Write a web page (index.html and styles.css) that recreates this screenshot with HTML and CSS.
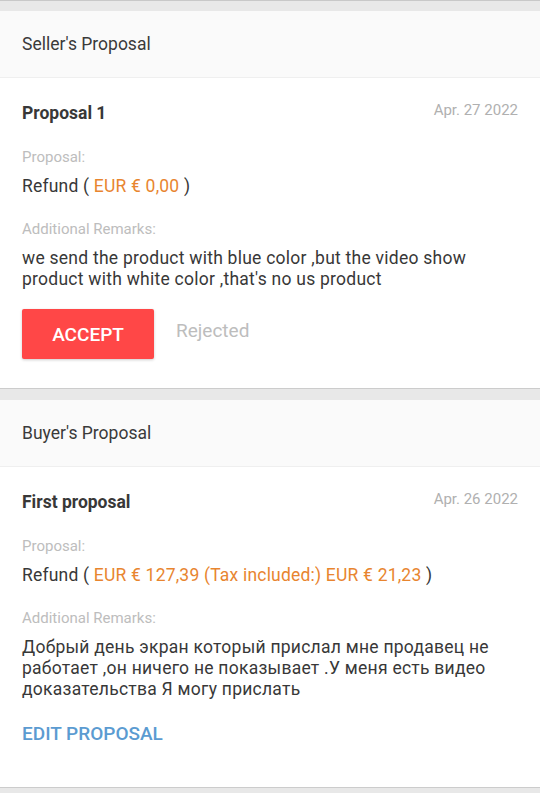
FILE: index.html
```html
<!DOCTYPE html>
<html>
<head>
    <meta charset="utf-8">
    <link rel="stylesheet" href="styles.css">
</head>
<body>
    <!-- Seller's proposal -->
    <div class="section">
        <div class="section-header">Seller's Proposal</div>
        <div class="card">
            <div class="title-row">
                <span class="title">Proposal 1</span>
                <span class="date">Apr. 27 2022</span>
            </div>
            <div class="label">Proposal:</div>
            <div class="value">Refund ( <span class="amount">EUR € 0,00</span> )</div>
            <div class="label label-remarks">Additional Remarks:</div>
            <div class="remarks">we send the product with blue color ,but the video show product with white color ,that's no us product</div>
            <div class="actions">
                <button class="accept-button">ACCEPT</button>
                <span class="status">Rejected</span>
            </div>
        </div>
    </div>

    <!-- Buyer's proposal -->
    <div class="section">
        <div class="section-header">Buyer's Proposal</div>
        <div class="card">
            <div class="title-row">
                <span class="title">First proposal</span>
                <span class="date">Apr. 26 2022</span>
            </div>
            <div class="label">Proposal:</div>
            <div class="value">Refund ( <span class="amount">EUR € 127,39 (Tax included:) EUR € 21,23</span> )</div>
            <div class="label label-remarks">Additional Remarks:</div>
            <div class="remarks">Добрый день экран который прислал мне продавец не работает ,он ничего не показывает .У меня есть видео доказательства Я могу прислать</div>
            <div class="actions">
                <button class="edit-button">EDIT PROPOSAL</button>
            </div>
        </div>
    </div>
</body>
</html>
```

FILE: styles.css
```css
body {
    margin: 0;
    background-color: #e8e8e8;
    border-top: 1px solid #c8c8c8;
    font-family: Roboto, "Noto Sans", sans-serif;
    color: #383838;
}

.section {
    margin-top: 10px;
}

.section + .section {
    margin-top: 11px;
}

.section-header {
    background-color: #fafafa;
    height: 66px;
    line-height: 67px;
    padding: 0 22px;
    font-size: 17.5px;
    color: #3a3a3a;
    border-bottom: 1px solid #efefef;
}

.card {
    background-color: #ffffff;
    padding: 24px 22px 29px 22px;
    border-bottom: 1px solid #cccccc;
}

.title-row {
    display: flex;
    justify-content: space-between;
    align-items: center;
    height: 22px;
}

.title {
    font-size: 17.5px;
    font-weight: bold;
    color: #383838;
}

.date {
    font-size: 15px;
    color: #b0b0b0;
    margin-top: -6px;
}

.label {
    font-size: 15px;
    line-height: 20px;
    color: #bdbdbd;
    margin-top: 23px;
}

.label-remarks {
    margin-top: 22px;
}

.value {
    font-size: 17.5px;
    line-height: 22px;
    letter-spacing: 0.2px;
    margin-top: 8px;
    color: #383838;
}

.amount {
    color: #e8852f;
}

.remarks {
    font-size: 17.5px;
    line-height: 21px;
    letter-spacing: 0.25px;
    margin-top: 9px;
    color: #383838;
}

.actions {
    display: flex;
    align-items: flex-start;
    margin-top: 19px;
}

.accept-button {
    width: 132px;
    height: 50px;
    background-color: #ff4747;
    color: white;
    font-family: Roboto, sans-serif;
    font-weight: 500;
    font-size: 19px;
    border: none;
    border-radius: 2px;
    box-shadow: 0 1px 3px rgba(0, 0, 0, 0.2);
    padding-top: 2px;
}

.status {
    margin-left: 22px;
    margin-top: 10px;
    font-size: 19px;
    color: #bdbdbd;
}

.edit-button {
    height: 50px;
    margin-top: -11px;
    padding: 0;
    background: none;
    border: none;
    font-family: Roboto, sans-serif;
    font-weight: 500;
    font-size: 19px;
    color: #5b9bd1;
}
```
